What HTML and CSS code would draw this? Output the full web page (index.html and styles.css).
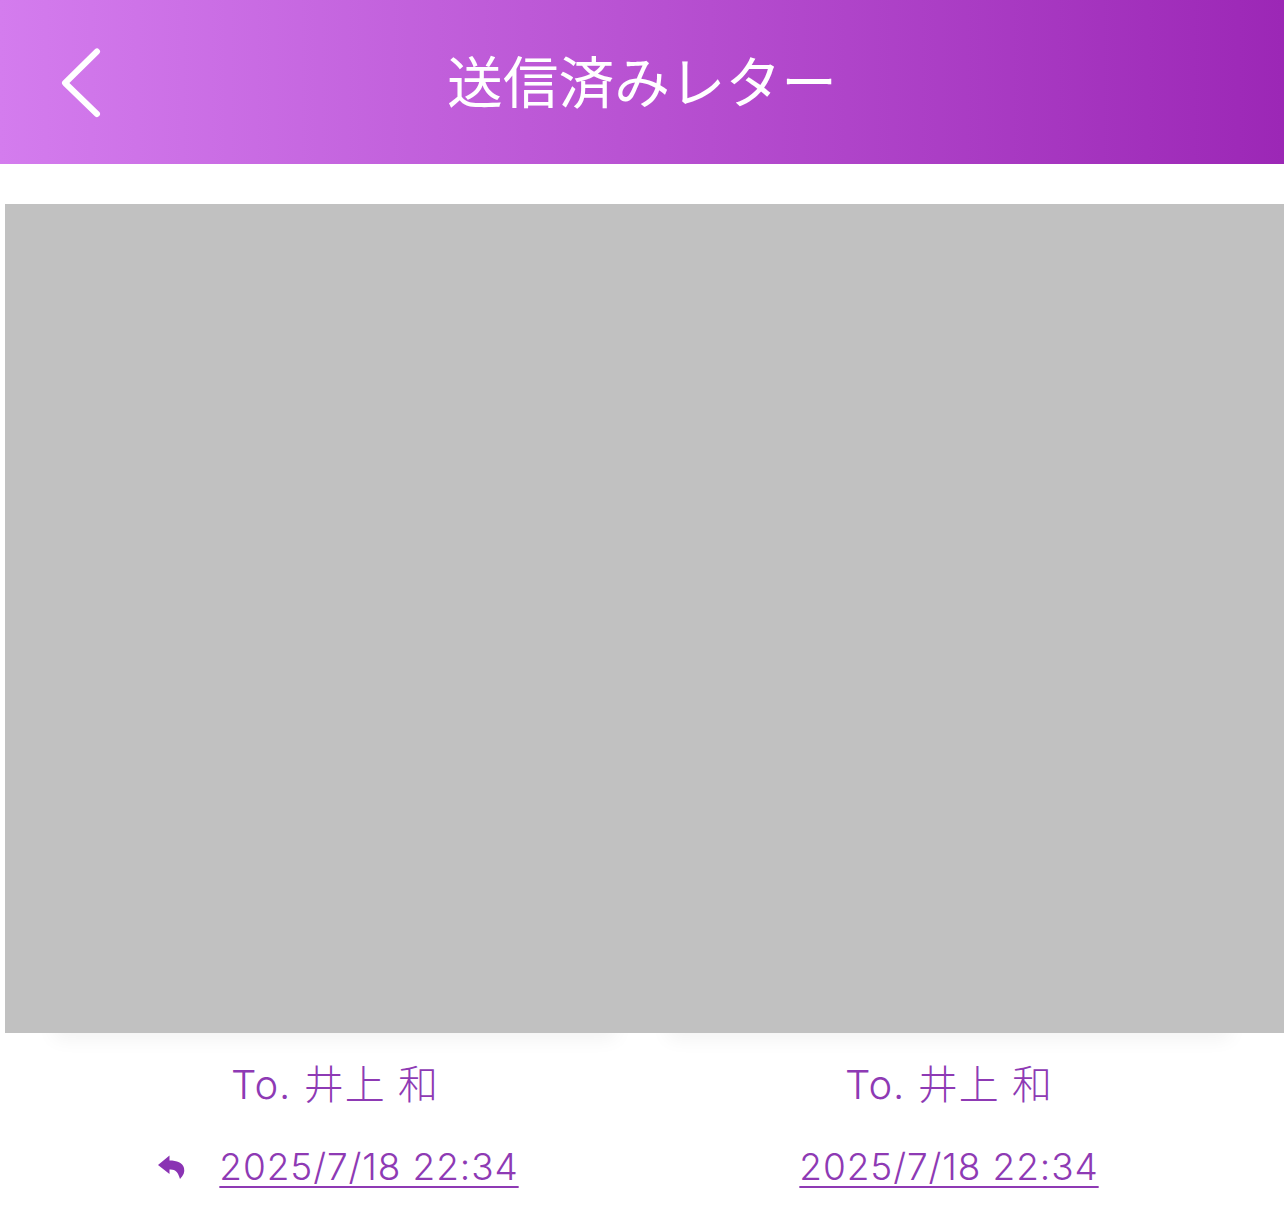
FILE: index.html
```html
<!DOCTYPE html>
<html lang="ja">
<head>
    <meta charset="utf-8">
    <title>送信済みレター</title>
    <link rel="stylesheet" href="styles.css">
</head>
<body>
    <header class="header">
        <a class="back-btn" href="#">
            <svg width="44" height="74" viewBox="0 0 44 74">
                <path d="M36 5.500 L4 37 L36 68" fill="none" stroke="#fff" stroke-width="6" stroke-linecap="round" stroke-linejoin="round"/>
            </svg>
        </a>
        <h1 class="header-title">送信済みレター</h1>
    </header>

    <main class="letters">
        <div class="letter-image"></div>
        <div class="letter-grid">
            <div class="letter-card">
                <div class="card-shadow"></div>
                <p class="letter-to">To. 井上 和</p>
                <div class="letter-date-row has-reply">
                    <svg class="reply-icon" width="28" height="28" viewBox="0 0 28 28">
                        <path d="M12.500 2.500 L1 12 L12.500 21 V16.500 C18 16 21 18.500 23 26 C26.500 22.500 28 19 27 15 C25.500 9.500 20 7.500 12.500 7.500 Z" fill="#8a33b3"/>
                    </svg>
                    <a class="letter-date" href="#">2025/7/18 22:34</a>
                </div>
            </div>
            <div class="letter-card">
                <div class="card-shadow"></div>
                <p class="letter-to">To. 井上 和</p>
                <div class="letter-date-row">
                    <a class="letter-date" href="#">2025/7/18 22:34</a>
                </div>
            </div>
        </div>
    </main>
</body>
</html>
```

FILE: styles.css
```css
body {
    margin: 0;
    background-color: #fff;
    font-family: Inter, "Noto Sans CJK JP", sans-serif;
    overflow: hidden;
}

.header {
    position: relative;
    height: 164px;
    display: flex;
    align-items: center;
    justify-content: center;
    background: linear-gradient(90deg, #d47cee 0%, #9c27b6 100%);
}
.back-btn {
    position: absolute;
    left: 61px;
    top: 46px;
    display: block;
    line-height: 0;
}
.header-title {
    margin: 0 0 7px;
    color: #fff;
    font-family: "Noto Sans CJK JP", sans-serif;
    font-size: 55.7px;
    font-weight: 400;
    line-height: 1;
}

.letters {
    padding: 40px 0 0 4.5px;
}
.letter-image {
    position: relative;
    z-index: 1;
    height: 828.5px;
    background-color: #c1c1c1;
}
.letter-grid {
    display: grid;
    grid-template-columns: 614px 614px;
    margin-left: 23.5px;
}
.letter-card {
    text-align: center;
    color: #8e3ab4;
}
.card-shadow {
    height: 20px;
    margin: -20px 26px 0;
    box-shadow: 0 5px 20px rgba(0, 0, 0, 0.06);
}
.letter-to {
    margin: 27px 0 0;
    font-size: 40px;
    font-weight: 300;
    line-height: 50px;
    letter-spacing: 1px;
}
.letter-date-row {
    display: flex;
    align-items: center;
    justify-content: center;
    gap: 34px;
    margin-top: 33px;
}
.has-reply {
    padding-left: 6px;
}
.reply-icon {
    flex: none;
}
.letter-date {
    color: #8e3ab4;
    font-size: 37px;
    font-weight: 300;
    line-height: 48px;
    letter-spacing: 0.9px;
    text-decoration: underline;
    text-decoration-thickness: 2px;
    text-underline-offset: 6px;
}
```
